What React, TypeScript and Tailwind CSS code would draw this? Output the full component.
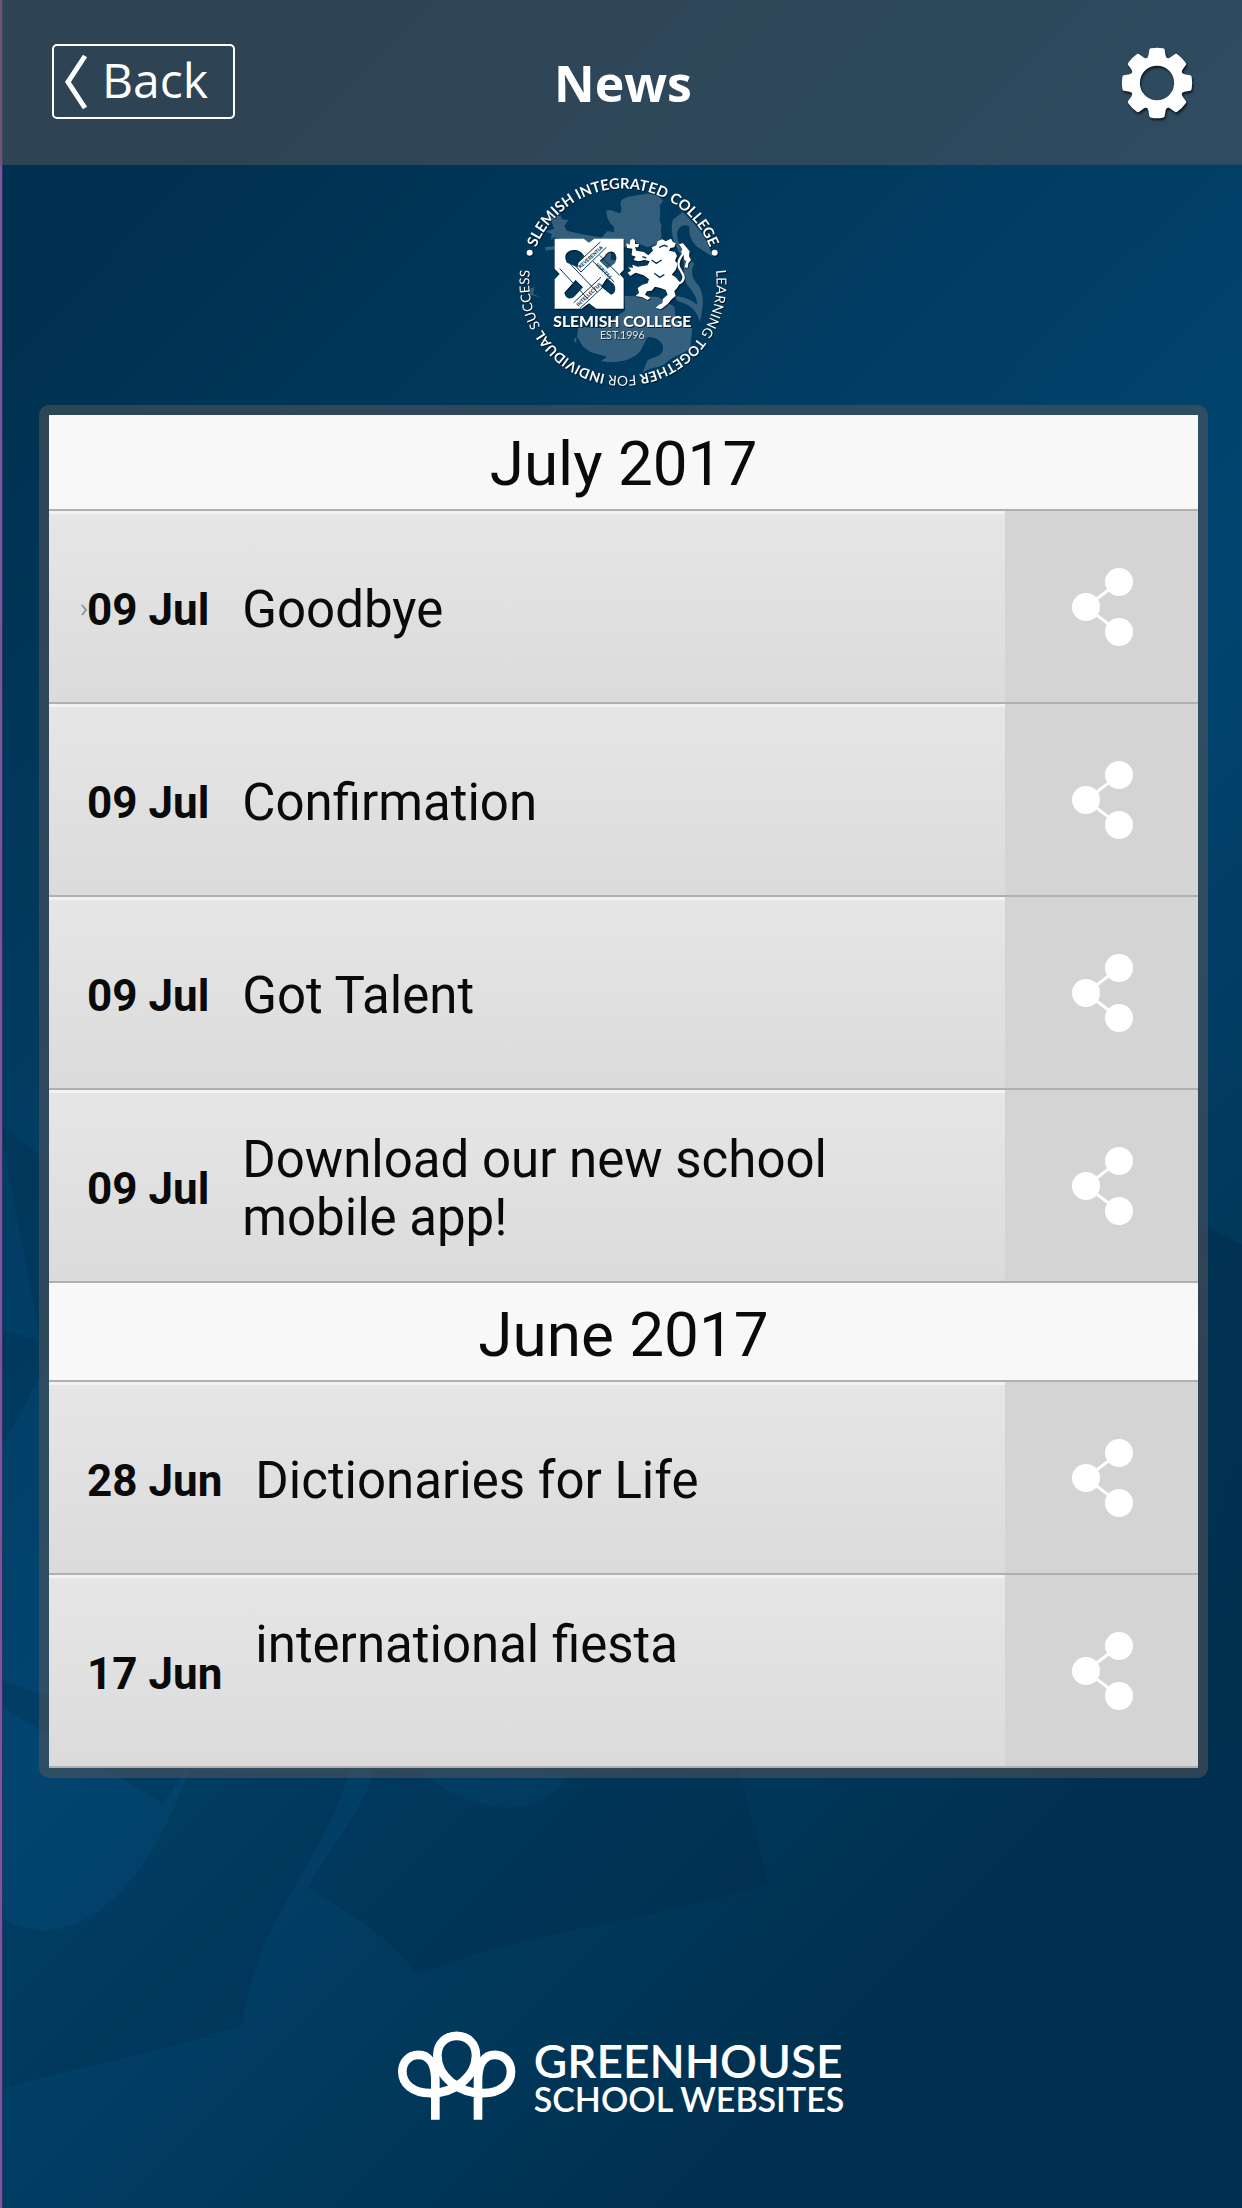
import React from "react";

type Item = { date: string; title: string; top?: boolean; marker?: boolean };
type Month = { name: string; items: Item[] };

const months: Month[] = [
  {
    name: "July 2017",
    items: [
      { date: "09 Jul", title: "Goodbye", marker: true },
      { date: "09 Jul", title: "Confirmation" },
      { date: "09 Jul", title: "Got Talent" },
      { date: "09 Jul", title: "Download our new school mobile app!" },
    ],
  },
  {
    name: "June 2017",
    items: [
      { date: "28 Jun", title: "Dictionaries for Life" },
      { date: "17 Jun", title: "international fiesta", top: true },
    ],
  },
];

function Backdrop() {
  return (
    <svg
      className="absolute inset-0 h-full w-full"
      viewBox="0 0 1242 2208"
      preserveAspectRatio="none"
      aria-hidden="true"
    >
      <defs>
        <linearGradient id="fadeDown" x1="0" y1="0" x2="0" y2="1">
          <stop offset="0" stopColor="#00223a" stopOpacity="0.3" />
          <stop offset="1" stopColor="#00223a" stopOpacity="0" />
        </linearGradient>
      </defs>
      <g fill="#00223a" fillOpacity="0.2">
        <path d="M0 1918C20 1930 50 1936 75 1924C120 1905 155 1860 190 1770H350C325 1860 250 1930 243 2024C160 2055 80 2064 0 2090Z" />
        <path d="M375 1770C360 1815 325 1855 308 1888C360 1920 400 1945 417 1976C520 1930 640 1925 768 1883L740 1770H572C550 1815 480 1825 420 1770Z" />
        <path d="M0 1706L163 1803L186 1770L60 1700L0 1680Z" />
        <path d="M0 1125L60 1170V1340L0 1450V1330L40 1340Z" />
      </g>
      <path d="M1198 1222L1242 1245V1740L1198 1760Z" fill="url(#fadeDown)" />
    </svg>
  );
}

function Gear() {
  return (
    <svg className="h-[74px] w-[74px] drop-shadow-[1px_2px_1px_rgba(0,0,0,0.7)]" viewBox="-111 -111 222 222" aria-hidden="true">
      <circle r="66" fill="none" stroke="#fff" strokeWidth="29" />
      {[0, 45, 90, 135, 180, 225, 270, 315].map((a) => (
        <path
          key={a}
          transform={`rotate(${a})`}
          fill="#fff"
          d="M-36 -70Q-27 -75 -26 -82L-23 -100Q-22 -104 -17 -104Q0 -107 17 -104Q22 -104 23 -100L26 -82Q27 -75 36 -70Z"
        />
      ))}
    </svg>
  );
}

function Share() {
  return (
    <svg className="h-20 w-[62px]" viewBox="0 0 62 80" aria-hidden="true">
      <path d="M47 15L14 40L47 65" fill="none" stroke="#fff" strokeWidth="3" />
      <circle cx="47" cy="15" r="14" fill="#fff" />
      <circle cx="14" cy="40" r="14" fill="#fff" />
      <circle cx="47" cy="65" r="14" fill="#fff" />
    </svg>
  );
}

function Crest() {
  return (
    <svg
      className="h-[230px] w-60 overflow-visible"
      viewBox="0 15 720 690"
      role="img"
      aria-label="Slemish Integrated College crest"
      fontFamily="Lato, sans-serif"
    >
      <defs>
        <path id="ringTop" d="M366 648A281 281 0 0 1 366 86A281 281 0 0 1 366 648" />
        <path id="ringLow" d="M366 86A281 281 0 0 1 366 648A281 281 0 0 1 366 86" />
        <path id="bandUp" d="M238 326L314 258" />
        <path id="bandDown" d="M283 315L330 363" />
        <path id="bandLow" d="M232 440L308 370" />
      </defs>

      {/* large faint lion behind the emblem */}
      <g fill="#8fa6b8" fillOpacity="0.36">
        <path d="M316 152C330 146 345 158 358 160C368 140 352 132 362 120C380 106 410 108 430 102C452 98 474 106 487 122L476 136C482 160 470 176 482 196C476 216 488 232 474 250L440 262L400 246L372 262L300 236L318 214L340 216L338 198C350 200 372 200 384 194C398 186 402 170 398 156L408 152L406 180C400 200 378 208 352 204C332 200 316 180 316 152Z" />
        <path d="M142 166L162 176L174 158L184 178L202 180L190 198L198 212L240 222L330 238V300H366V330H300L240 250L160 232L150 240L152 222L132 214L160 206Z" />
        <path d="M515 180L545 156C580 190 620 230 634 290C620 280 600 268 585 258C570 240 562 222 566 200C548 190 530 200 528 222C530 262 560 290 580 312C566 334 574 356 592 376C612 402 606 450 596 486C590 450 560 430 530 424L520 408C550 410 572 420 588 434C590 410 570 390 556 370C540 340 556 320 545 290C520 260 506 220 515 180Z" />
        <path d="M232 500L300 504L372 452L370 408L470 410L520 440L524 478L574 506L568 560C560 580 520 584 498 606C480 626 440 620 424 640L440 600C460 590 480 590 486 570C490 548 470 532 440 530L420 570C400 600 350 612 300 604L318 590L268 576L246 560L228 530Z" />
        <path d="M132 262L160 258V268L134 272ZM218 540L226 530V552Z" />
        <path d="M80 390L100 380L96 402L120 412L86 404Z" />
      </g>

      <g className="drop-shadow-[2px_3px_2px_rgba(0,0,0,0.7)]" fill="#fff">
        {/* ring motto */}
        <g textAnchor="middle">
          <text fontSize="44" fontWeight="700">
            <textPath href="#ringTop" startOffset="50%">SLEMISH INTEGRATED COLLEGE</textPath>
          </text>
          <text fontSize="41">
            <textPath href="#ringLow" startOffset="50%">
              LEARNING <tspan fontWeight="700">TOGETHER</tspan> FOR{" "}
              <tspan fontWeight="700">INDIVIDUAL</tspan> SUCCESS
            </textPath>
          </text>
        </g>
        <circle cx="86" cy="278" r="9" />
        <circle cx="641" cy="278" r="9" />

        {/* interlaced knot */}
        <path
          fillRule="evenodd"
          d="M161 236H248L264 248L280 236H368V330L356 342L368 356V446H286L264 430L242 446H161V358L176 342L161 326Z
             M230 322L198 308C184 284 202 268 222 270C238 272 244 280 250 288L232 308Z
             M310 290C326 262 348 276 346 296C344 314 330 316 320 326L296 302Z
             M224 360L190 398C196 420 212 418 222 408L246 382Z
             M300 380L330 404C344 402 346 384 338 372L318 354Z"
        />
      </g>
      <g fill="none" stroke="#04385c" strokeWidth="3">
        <path d="M222 316L298 246M240 336L316 262M222 316L240 336M176 326L262 418M208 312L288 396M276 304L340 366M296 286L356 346M218 428L300 352M236 446L320 368" />
      </g>
      <g fill="#04385c" fontSize="15" fontWeight="900">
        <text><textPath href="#bandUp">REVERENTIA</textPath></text>
        <text><textPath href="#bandDown">VERITAS</textPath></text>
        <text><textPath href="#bandLow">INTELLECTUS</textPath></text>
      </g>

      {/* rampant lion */}
      <g className="drop-shadow-[2px_3px_2px_rgba(0,0,0,0.7)]" fill="#fff">
        <path d="M376 250L386 254L388 240L396 236L402 242L402 252L414 252L412 262L402 262L406 272L428 276L442 286L456 272L452 262L466 256L470 244L484 238L494 244L510 236L516 246L524 250L520 262L508 264L504 272L522 276L528 288L522 302L530 312L524 330L512 344L524 352L538 368L530 382L520 394L524 408L512 418L500 432L480 448L464 444L474 434L484 430L486 416L500 404L494 390L478 384L462 380L452 392L438 394L432 404L448 414L440 420L424 412L404 408L414 398L410 384L424 374L440 370L444 358L428 346L404 338L388 348L380 338L390 332L382 322L396 324L394 314L410 320L428 318L440 316L446 304L432 300L412 304L398 300L404 290L392 286L394 266L378 264Z" />
        <path d="M534 252L546 250L556 262L566 274L564 288L570 300L562 310L560 324L550 322L556 304L550 300L548 286L540 276L544 268Z" />
        <path
          d="M552 274C540 290 528 302 534 322C544 340 554 352 544 364C536 374 526 370 520 364"
          fill="none"
          stroke="#fff"
          strokeWidth="7"
        />
      </g>
      <g fill="none" stroke="#04385c" strokeWidth="4">
        <path d="M474 262L490 256L500 260M452 300L466 310L482 300M460 340L476 352L490 344M424 290L436 294" />
      </g>

      <g className="drop-shadow-[2px_3px_2px_rgba(0,0,0,0.7)]" fill="#fff" textAnchor="middle">
        <text x="364" y="500" fontSize="47" fontWeight="900">SLEMISH COLLEGE</text>
        <text x="364" y="538" fontSize="32" fontWeight="400" fillOpacity="0.85">EST.1996</text>
      </g>
    </svg>
  );
}

function Row({ item }: { item: Item }) {
  return (
    <li className="flex min-h-[193px] border-b-2 border-[#b0b0b0]">
      <a
        href="#article"
        className="relative flex flex-1 items-center gap-[33px] border-t-3 border-[#f2f2f2] bg-linear-to-b from-[#e6e6e6] to-[#dbdbdb] pt-1 pl-[38px] text-[#0a0a0a]"
      >
        {item.marker && (
          <svg className="absolute left-8 h-3 w-[6px]" viewBox="0 0 6 12" aria-hidden="true">
            <path d="M1 1L5 6L1 11" fill="none" stroke="#8a979c" strokeWidth="2" />
          </svg>
        )}
        <span className="shrink-0 text-[44px] leading-[58px] font-bold">{item.date}</span>
        <span className={item.top ? "min-h-[116px] max-w-[620px] text-[51px] leading-[58px]" : "max-w-[620px] text-[51px] leading-[58px]"}>
          {item.title}
        </span>
      </a>
      <button type="button" aria-label={`Share ${item.title}`} className="flex w-[193px] shrink-0 items-center justify-center bg-[#d4d4d4] pl-[2px]">
        <Share />
      </button>
    </li>
  );
}

export default function App() {
  return (
    <div className="relative flex min-h-screen flex-col bg-[linear-gradient(135deg,#00304f_9%,#024570_52%,#00304f_84%)] font-[Roboto,sans-serif]">
      <Backdrop />
      <div className="absolute inset-y-0 left-0 w-[3px] border-r border-[#1d3a63] bg-[#8450a0]" />

      <header className="relative grid h-[165px] grid-cols-[1fr_auto_1fr] items-center bg-[#5c5859]/50 pr-12 pl-[52px] font-['Open_Sans',sans-serif] text-white">
        <button type="button" className="mb-[2px] flex h-[75px] w-[183px] items-center gap-[14px] justify-self-start rounded-[5px] border-2 border-white pb-1 pl-[10px]">
          <svg className="mt-1 h-14 w-6" viewBox="0 0 24 56" aria-hidden="true">
            <path d="M21 2L4 28L21 54" fill="none" stroke="#fff" strokeWidth="5" />
          </svg>
          <span className="text-[48px] leading-none">Back</span>
        </button>
        <h1 className="text-[50px] leading-none font-bold">News</h1>
        <button type="button" aria-label="Settings" className="justify-self-end">
          <Gear />
        </button>
      </header>

      <div className="relative flex justify-center">
        <Crest />
      </div>

      <main className="relative mt-[10px] mr-[34px] ml-[39px] rounded-[10px] bg-[#5c5859]/50 p-[10px]">
        {months.map((m) => (
          <section key={m.name} className="bg-[#f8f8f8] not-first:pt-[3px]">
            <h2 className="border-b-2 border-[#b0b0b0] pt-[10px] pb-[6px] text-center text-[62px] leading-[78px] text-[#0a0a0a]">{m.name}</h2>
            <ul>
              {m.items.map((item) => (
                <Row key={item.title} item={item} />
              ))}
            </ul>
          </section>
        ))}
      </main>

      <footer className="relative mt-auto flex items-center justify-center gap-[18px] pb-[88px] text-white">
        <svg className="h-[89px] w-[118px]" viewBox="57 92 354 266" aria-hidden="true">
          <path
            fill="none"
            stroke="#fff"
            strokeWidth="26"
            d="M169 358V240C169 190 150 163 118 163C90 163 70 185 70 213C70 250 100 278 155 278C230 278 291 225 291 165C291 128 265 106 233 106C201 106 175 128 175 165C175 225 236 278 311 278C366 278 396 250 396 213C396 185 376 163 348 163C316 163 297 190 297 240V358"
          />
        </svg>
        <p className="pt-1 font-[Lato,sans-serif] font-semibold">
          <span className="block text-[46px] leading-[42px]">GREENHOUSE</span>
          <span className="block text-[34px] leading-[34px]">SCHOOL WEBSITES</span>
        </p>
      </footer>
    </div>
  );
}
